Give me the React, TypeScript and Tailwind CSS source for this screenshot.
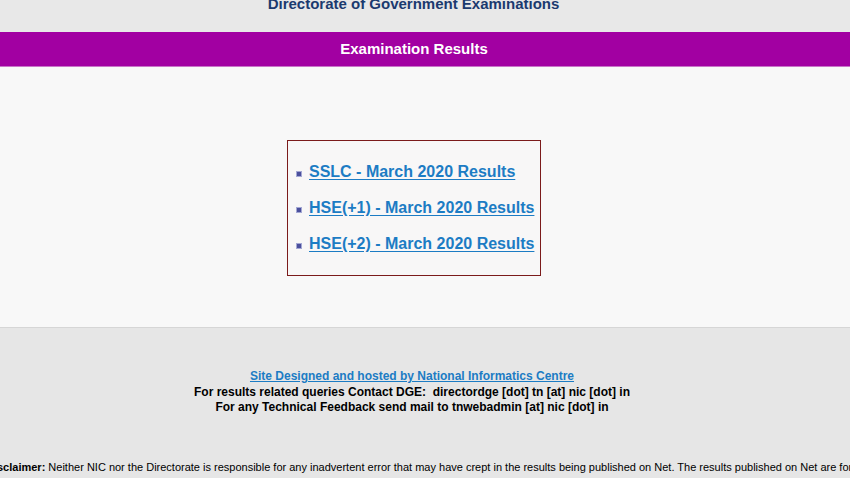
export default function App() {
  const results = [
    "SSLC - March 2020 Results",
    "HSE(+1) - March 2020 Results",
    "HSE(+2) - March 2020 Results",
  ];

  return (
    <div className="w-[850px] h-[478px] overflow-hidden bg-[#e8e8e8] font-['Liberation_Sans',Arial,sans-serif]">
      {/* Header */}
      <div className="h-[32px] flex justify-center pr-[23px]">
        <h1 className="mt-[-5px] text-[15px] leading-[17px] font-bold text-[#1b3a6f]">
          Directorate of Government Examinations
        </h1>
      </div>

      <div className="h-[35px] bg-[#a200a2] border-b border-[#c874c8] flex items-center justify-center pr-[22px]">
        <span className="text-[15px] font-bold text-white">Examination Results</span>
      </div>

      {/* Content */}
      <div className="h-[261px] bg-[#f8f8f8] border-b border-[#d6d6d6] flex justify-center pt-[73px] pr-[22px]">
        <div className="w-[254px] h-[136px] border border-[#7b1b1b] bg-[#f8f7f7] pl-[8px] pt-[21px] flex flex-col gap-[17px]">
          {results.map((r) => (
            <div key={r} className="flex items-center gap-[7px]">
              <span className="mt-[4px] w-[6px] h-[6px] bg-[#4b4f9c] border border-[#a4a8d4]" />
              <a className="text-[16px] leading-[19px] font-bold text-[#1c7cc4] underline underline-offset-2 cursor-pointer">
                {r}
              </a>
            </div>
          ))}
        </div>
      </div>

      {/* Footer */}
      <div className="bg-[#e6e6e6] pt-[41px] pr-[26px] flex flex-col items-center text-[12px] leading-[15.5px] font-bold">
        <a className="text-[#1c7cc4] underline cursor-pointer">
          Site Designed and hosted by National Informatics Centre
        </a>
        <p className="text-black">
          For results related queries Contact DGE:&nbsp; directordge [dot] tn [at] nic [dot] in
        </p>
        <p className="text-black">For any Technical Feedback send mail to tnwebadmin [at] nic [dot] in</p>
      </div>
      <div className="bg-[#e6e6e6] pt-[43px] pb-[10px] ml-[-14px] whitespace-nowrap text-[11px] text-black">
        <b>Disclaimer:</b> Neither NIC nor the Directorate is responsible for any inadvertent error that may have crept in the
        results being published on Net. The results published on Net are for immediate information to the examinees.
      </div>
    </div>
  );
}
